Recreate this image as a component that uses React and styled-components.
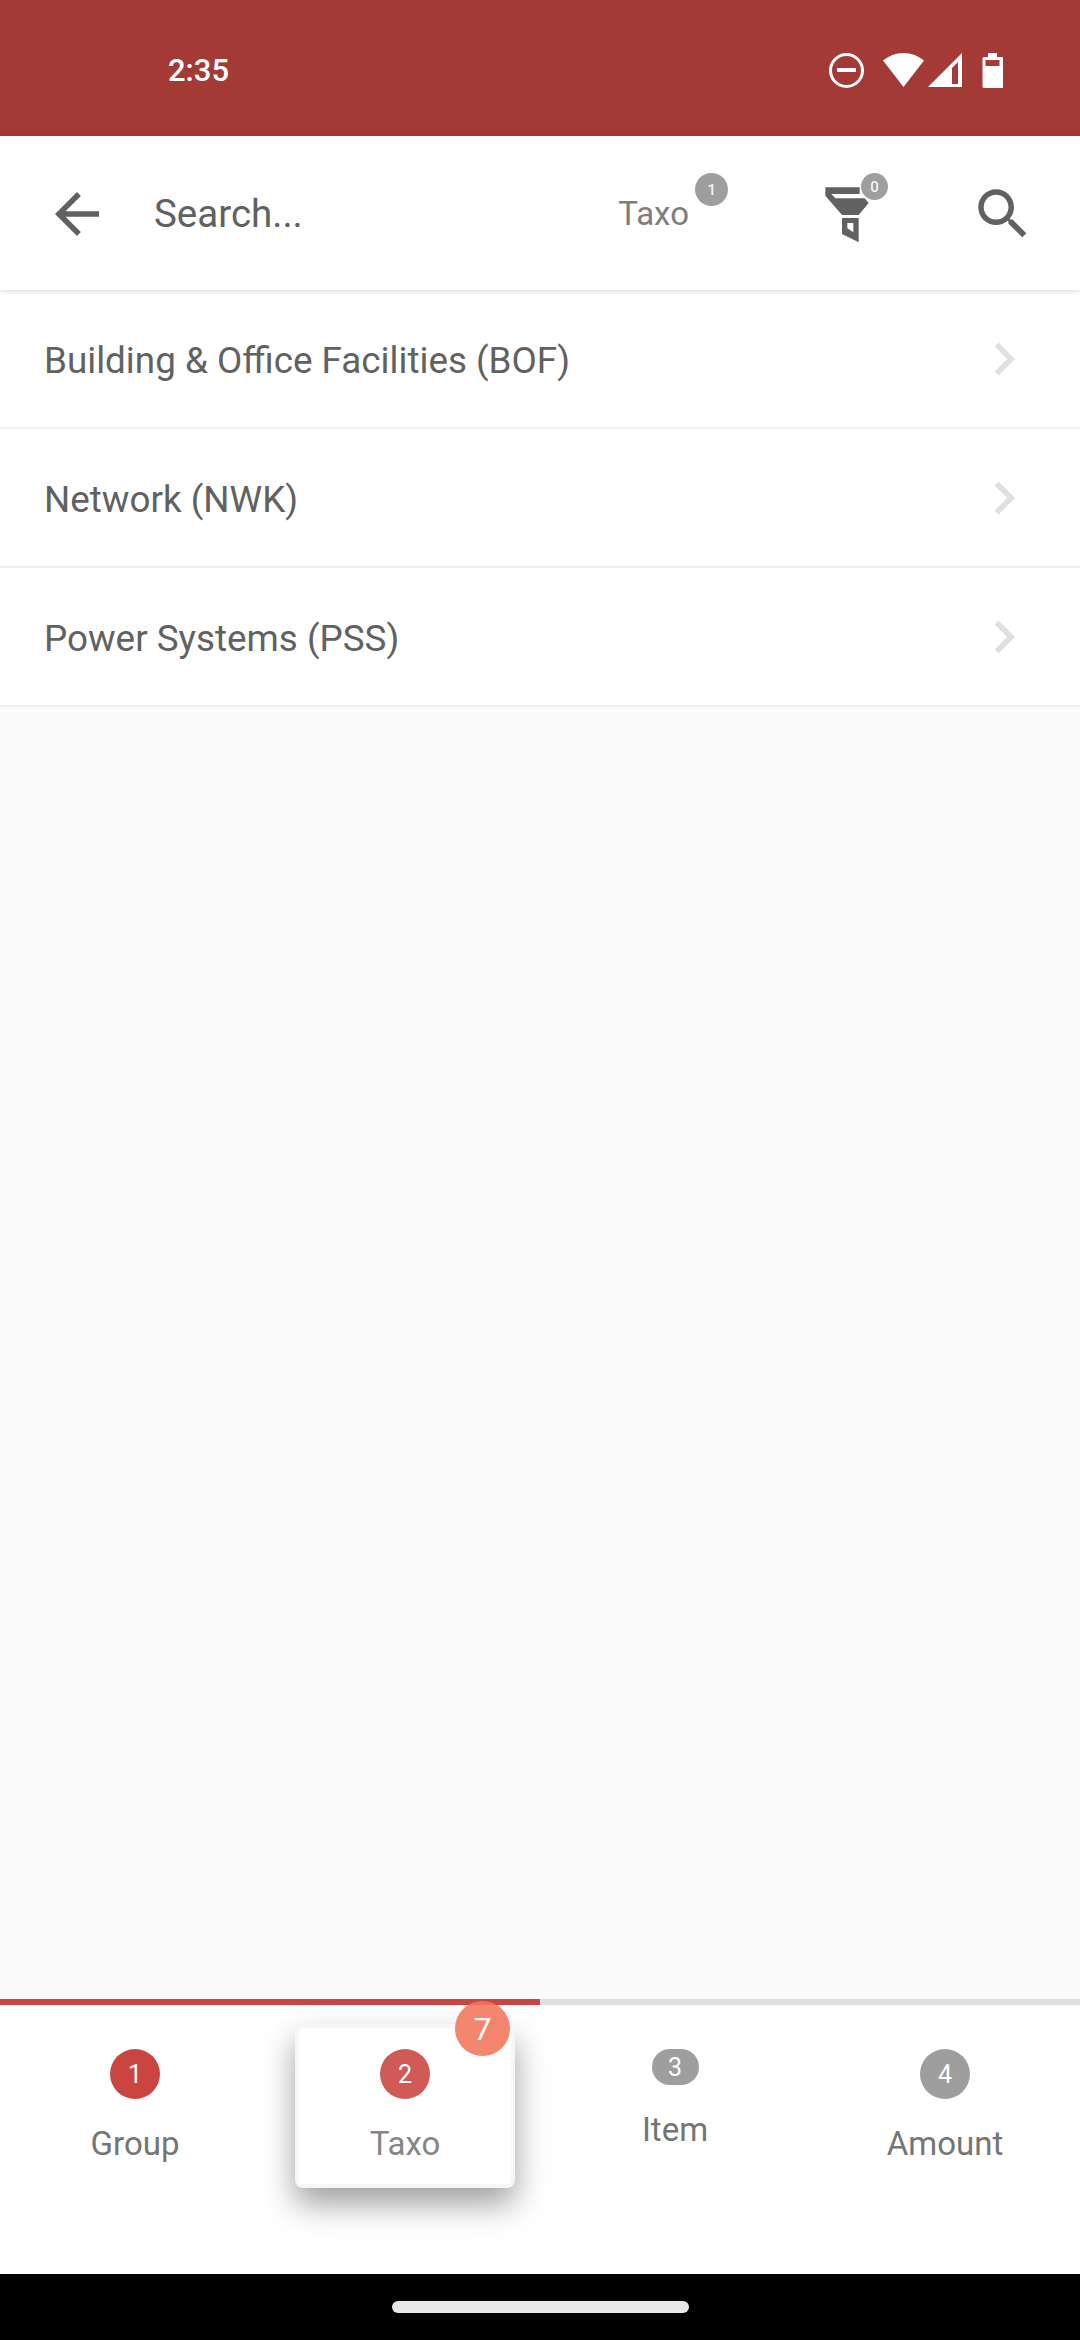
import React from 'react';
import styled, { createGlobalStyle } from 'styled-components';

const GlobalStyle = createGlobalStyle`
    html, body {
        margin: 0;
        padding: 0;
        background: #fafafa;
    }
    * {
        box-sizing: border-box;
    }
`

const Screen = styled.div`
    width: 1080px;
    height: 2340px;
    display: flex;
    flex-direction: column;
    overflow: hidden;
    background: #fafafa;
    font-family: Roboto, "Liberation Sans", sans-serif;
`

const StatusBar = styled.div`
    flex: 0 0 136px;
    display: flex;
    align-items: flex-start;
    justify-content: space-between;
    padding: 53px 77px 0 168px;
    background: #a43a36;
    color: #fff;
`

const Clock = styled.span`
    font-size: 31px;
    font-weight: 500;
    line-height: 35px;
`

const Header = styled.header`
    position: relative;
    z-index: 1;
    flex: 0 0 154px;
    display: flex;
    align-items: center;
    padding: 2px 44px 0 0;
    background: #fff;
    box-shadow: 0 1px 5px rgba(0, 0, 0, 0.16);
    color: #616161;
`

const IconSlot = styled.span`
    display: flex;
    flex: 0 0 auto;
    margin-left: ${props => props.left}px;
`

const SearchText = styled.span`
    flex: 1;
    margin-left: 44px;
    font-size: 38.5px;
    line-height: 42px;
    color: #616161;
`

const HeaderFilter = styled.div`
    position: relative;
    margin-right: 134px;
    font-size: 33px;
    line-height: 38px;
    color: #7d7d7d;
`

const FilterIcon = styled.div`
    position: relative;
    display: flex;
    width: 48px;
    height: 60px;
`

const CountBadge = styled.span`
    position: absolute;
    left: ${props => props.left}px;
    top: ${props => props.top}px;
    width: ${props => props.size}px;
    height: ${props => props.size}px;
    display: flex;
    align-items: center;
    justify-content: center;
    border-radius: 50%;
    background: #9e9e9e;
    color: #f5f5f5;
    font-size: 15px;
    font-weight: 500;
`

const List = styled.main`
    flex: 1;
`

const Row = styled.div`
    height: 139px;
    display: flex;
    align-items: center;
    justify-content: space-between;
    padding: 0 43px 0 44px;
    background: #fff;
    border-bottom: 2px solid #eee;
    font-size: 36.8px;
    color: #616161;
`

const RowLabel = styled.span`
    padding-top: 3px;
`

const Progress = styled.div`
    flex: 0 0 6px;
    background: linear-gradient(to right, #cb4540 50%, #e0e0e0 50%);
`

const StepBar = styled.nav`
    flex: 0 0 269px;
    display: grid;
    grid-template-columns: repeat(4, 1fr);
    align-items: start;
    background: #fff;
`

const Step = styled.div`
    position: relative;
    height: 164px;
    margin: 19px 25px 0;
    padding-top: 25px;
    display: flex;
    flex-direction: column;
    align-items: center;
    border-radius: 8px;
    ${props => props.$active && `
        background: #fff;
        border: 4px solid #f6f6f6;
        padding-top: 21px;
        box-shadow: 0 16px 32px rgba(0, 0, 0, 0.38);
    `}
`

const StepNumber = styled.span`
    width: ${props => (props.$squished ? 47 : 50)}px;
    height: ${props => (props.$squished ? 36 : 50)}px;
    display: flex;
    align-items: center;
    justify-content: center;
    border-radius: 25px;
    background: ${props => props.color};
    color: #fff;
    font-size: 25px;
`

const StepLabel = styled.span`
    margin-top: 26px;
    font-size: 33px;
    line-height: 38px;
    color: ${props => (props.$active ? '#858585' : '#757575')};
`

const StepCount = styled.span`
    position: absolute;
    top: -27px;
    right: 1px;
    z-index: 2;
    width: 55px;
    height: 55px;
    display: flex;
    align-items: center;
    justify-content: center;
    border-radius: 50%;
    background: rgba(243, 116, 90, 0.88);
    color: #fff;
    font-size: 32px;
`

const NavBar = styled.div`
    flex: 0 0 66px;
    display: flex;
    justify-content: center;
    padding-top: 27px;
    background: #000;
`

const HomePill = styled.span`
    width: 297px;
    height: 12px;
    border-radius: 6px;
    background: #e8e8e8;
`

const StatusIcons = () => (
    <svg width="174" height="36" viewBox="0 0 174 36" fill="#fff">
        <circle cx="17.5" cy="17.5" r="16" fill="none" stroke="#fff" strokeWidth="3" />
        <rect x="8" y="15" width="19" height="4" />
        <path d="M74.500 0c8 0 15 3 20.500 7.500L74.500 34 54 7.500C59.500 3 66.500 0 74.500 0z" />
        <path fillRule="evenodd" d="M133 0V34H99ZM123 15V31H129V9Z" />
        <path fillRule="evenodd" d="M159 0h9v4h5a1.500 1.500 0 0 1 1.500 1.500V33.500a1.500 1.500 0 0 1-1.500 1.500h-18a1.500 1.500 0 0 1-1.500-1.500V5.500A1.500 1.500 0 0 1 155 4h4zM156.500 7v6h14V7z" />
    </svg>
)

const Arrow = () => (
    <svg width="66" height="66" viewBox="0 0 24 24" fill="#616161">
        <path d="M20 11H7.830l5.590-5.590L12 4l-8 8 8 8 1.410-1.410L7.830 13H20v-2z" />
    </svg>
)

const Magnifier = () => (
    <svg width="66" height="66" viewBox="0 0 24 24" fill="#616161">
        <path d="M15.500 14h-.79l-.28-.27C15.410 12.590 16 11.110 16 9.500 16 5.910 13.090 3 9.500 3S3 5.910 3 9.500 5.910 16 9.500 16c1.610 0 3.090-.59 4.230-1.570l.27.28v.79l5 4.990L20.490 19l-4.990-5zm-6 0C7.010 14 5 11.990 5 9.500S7.010 5 9.500 5 14 7.010 14 9.500 11.990 14 9.500 14z" />
    </svg>
)

const Chevron = () => (
    <svg width="66" height="66" viewBox="0 0 24 24" fill="#e0e0e0">
        <path d="M10 6L8.590 7.410 13.170 12l-4.580 4.590L10 18l6-6z" />
    </svg>
)

const Funnel = () => (
    <svg width="48" height="60" viewBox="125 95 144 180" fill="#616161">
        <path d="M132 105H235V125H150L162 138H250L262 152L232 188H182L132 130Z" />
        <path fillRule="evenodd" d="M182 197H232V270L182 245ZM198 212V228L216 240V212Z" />
    </svg>
)

const rows = ['Building & Office Facilities (BOF)', 'Network (NWK)', 'Power Systems (PSS)']

const steps = [
    { number: 1, label: 'Group', color: '#cb4540' },
    { number: 2, label: 'Taxo', color: '#d05a56', active: true, count: 7 },
    { number: 3, label: 'Item', color: '#9e9e9e', squished: true },
    { number: 4, label: 'Amount', color: '#9e9e9e' },
]

const App = () => (
    <Screen>
        <GlobalStyle />
        <StatusBar>
            <Clock>2:35</Clock>
            <StatusIcons />
        </StatusBar>
        <Header>
            <IconSlot left={44}><Arrow /></IconSlot>
            <SearchText>Search...</SearchText>
            <HeaderFilter>
                Taxo
                <CountBadge left={77} top={-22} size={33}>1</CountBadge>
            </HeaderFilter>
            <FilterIcon>
                <Funnel />
                <CountBadge left={38} top={-11} size={27}>0</CountBadge>
            </FilterIcon>
            <IconSlot left={99}><Magnifier /></IconSlot>
        </Header>
        <List>
            {rows.map(row => (
                <Row key={row}>
                    <RowLabel>{row}</RowLabel>
                    <Chevron />
                </Row>
            ))}
        </List>
        <Progress />
        <StepBar>
            {steps.map(step => (
                <Step key={step.number} $active={step.active}>
                    <StepNumber color={step.color} $squished={step.squished}>{step.number}</StepNumber>
                    <StepLabel $active={step.active}>{step.label}</StepLabel>
                    {step.count && <StepCount>{step.count}</StepCount>}
                </Step>
            ))}
        </StepBar>
        <NavBar><HomePill /></NavBar>
    </Screen>
)

export default App;
